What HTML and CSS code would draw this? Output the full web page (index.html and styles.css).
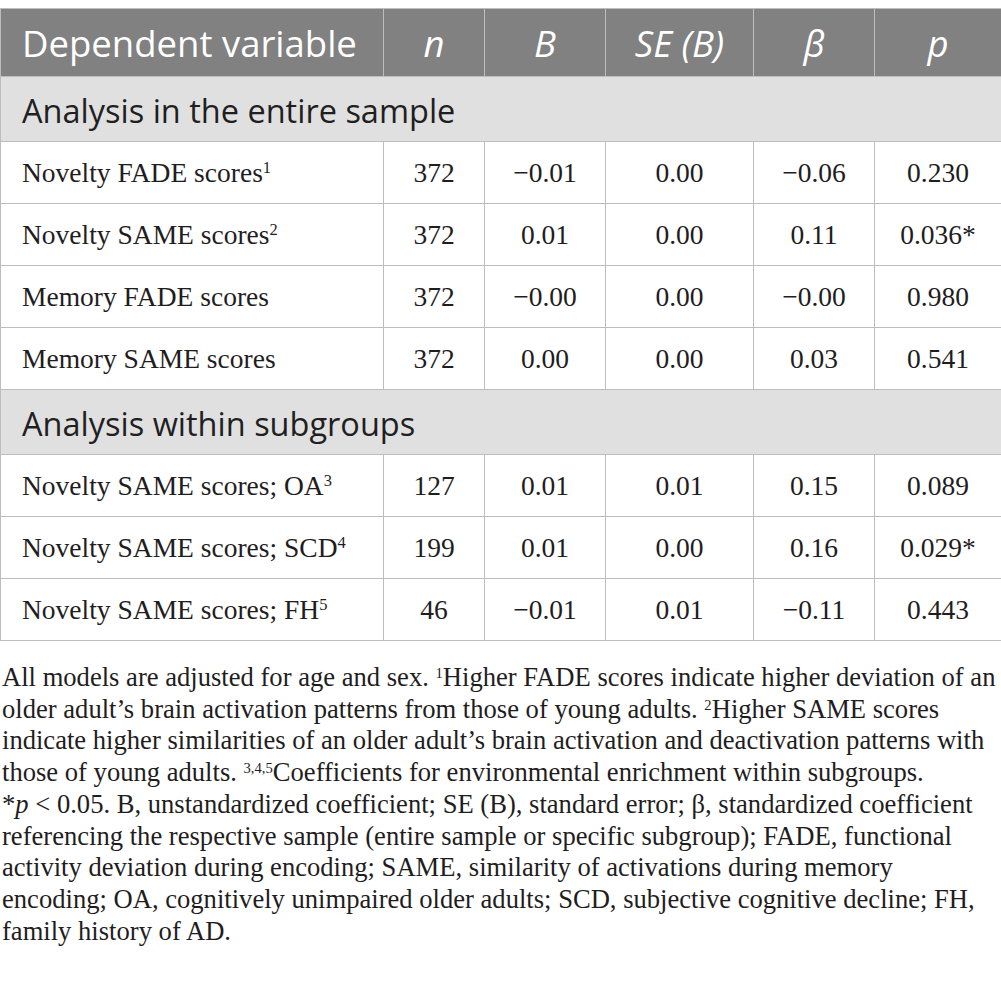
FILE: index.html
```
<!DOCTYPE html>
<html>
<head>
<meta charset="utf-8">
<link rel="stylesheet" href="styles.css">
</head>
<body>
<table class="tbl">
  <colgroup>
    <col class="c1"><col class="c2"><col class="c3"><col class="c4"><col class="c5"><col class="c6">
  </colgroup>
  <thead>
    <tr class="head">
      <th class="first">Dependent variable</th>
      <th><i>n</i></th>
      <th><i>B</i></th>
      <th><i>SE (B)</i></th>
      <th><i>β</i></th>
      <th><i>p</i></th>
    </tr>
  </thead>
  <tbody>
    <tr class="section"><td colspan="6">Analysis in the entire sample</td></tr>
    <tr class="row"><td class="first">Novelty FADE scores<sup>1</sup></td><td>372</td><td>−0.01</td><td>0.00</td><td>−0.06</td><td>0.230</td></tr>
    <tr class="row"><td class="first">Novelty SAME scores<sup>2</sup></td><td>372</td><td>0.01</td><td>0.00</td><td>0.11</td><td>0.036*</td></tr>
    <tr class="row"><td class="first">Memory FADE scores</td><td>372</td><td>−0.00</td><td>0.00</td><td>−0.00</td><td>0.980</td></tr>
    <tr class="row"><td class="first">Memory SAME scores</td><td>372</td><td>0.00</td><td>0.00</td><td>0.03</td><td>0.541</td></tr>
    <tr class="section"><td colspan="6">Analysis within subgroups</td></tr>
    <tr class="row"><td class="first">Novelty SAME scores; OA<sup>3</sup></td><td>127</td><td>0.01</td><td>0.01</td><td>0.15</td><td>0.089</td></tr>
    <tr class="row"><td class="first">Novelty SAME scores; SCD<sup>4</sup></td><td>199</td><td>0.01</td><td>0.00</td><td>0.16</td><td>0.029*</td></tr>
    <tr class="row"><td class="first">Novelty SAME scores; FH<sup>5</sup></td><td>46</td><td>−0.01</td><td>0.01</td><td>−0.11</td><td>0.443</td></tr>
  </tbody>
</table>
<p class="note">All models are adjusted for age and sex. <sup>1</sup>Higher FADE scores indicate higher deviation of an<br>older adult’s brain activation patterns from those of young adults. <sup>2</sup>Higher SAME scores<br>indicate higher similarities of an older adult’s brain activation and deactivation patterns with<br>those of young adults. <sup>3,4,5</sup>Coefficients for environmental enrichment within subgroups.<br>*<i>p</i> &lt; 0.05. B, unstandardized coefficient; SE (B), standard error; β, standardized coefficient<br>referencing the respective sample (entire sample or specific subgroup); FADE, functional<br>activity deviation during encoding; SAME, similarity of activations during memory<br>encoding; OA, cognitively unimpaired older adults; SCD, subjective cognitive decline; FH,<br>family history of AD.</p>
</body>
</html>
```
FILE: styles.css
```
html, body {
  margin: 0;
  padding: 0;
  background: #ffffff;
}
body {
  padding-top: 8px;
  font-family: "Liberation Serif", "Times New Roman", serif;
  color: #1f1d1e;
}
.tbl {
  width: 1001px;
  border-collapse: collapse;
  table-layout: fixed;
}
.c1 { width: 383px; }
.c2 { width: 101px; }
.c3 { width: 121px; }
.c4 { width: 148px; }
.c5 { width: 121px; }
.c6 { width: 127px; }
.tbl th, .tbl td {
  border: 1px solid #bdbdbd;
  padding: 0;
  text-align: center;
  white-space: nowrap;
}
.head th {
  background: #808180;
  color: #ffffff;
  font-family: "Open Sans", "Noto Sans", sans-serif;
  font-weight: normal;
  font-size: 36.5px;
  line-height: 40px;
  height: 66px;
  padding-top: 1px;
}
.head th.first {
  text-align: left;
  padding-left: 21px;
}
.head th i {
  font-style: italic;
}
.section td {
  background: #e1e0e1;
  color: #1f1f1f;
  font-family: "Open Sans", "Noto Sans", sans-serif;
  font-size: 32.5px;
  line-height: 40px;
  text-align: left;
  padding-left: 21px;
  padding-top: 3px;
  height: 61px;
}
.row td {
  font-size: 27.5px;
  line-height: 32px;
  height: 61px;
}
.row td.first {
  text-align: left;
  padding-left: 21px;
}
sup {
  font-size: 0.6em;
  line-height: 0;
  vertical-align: 0.55em;
}
.note {
  margin: 21px 0 0 2px;
  font-size: 26.6px;
  line-height: 31.7px;
  white-space: nowrap;
}
.note sup {
  font-size: 0.55em;
}
```
